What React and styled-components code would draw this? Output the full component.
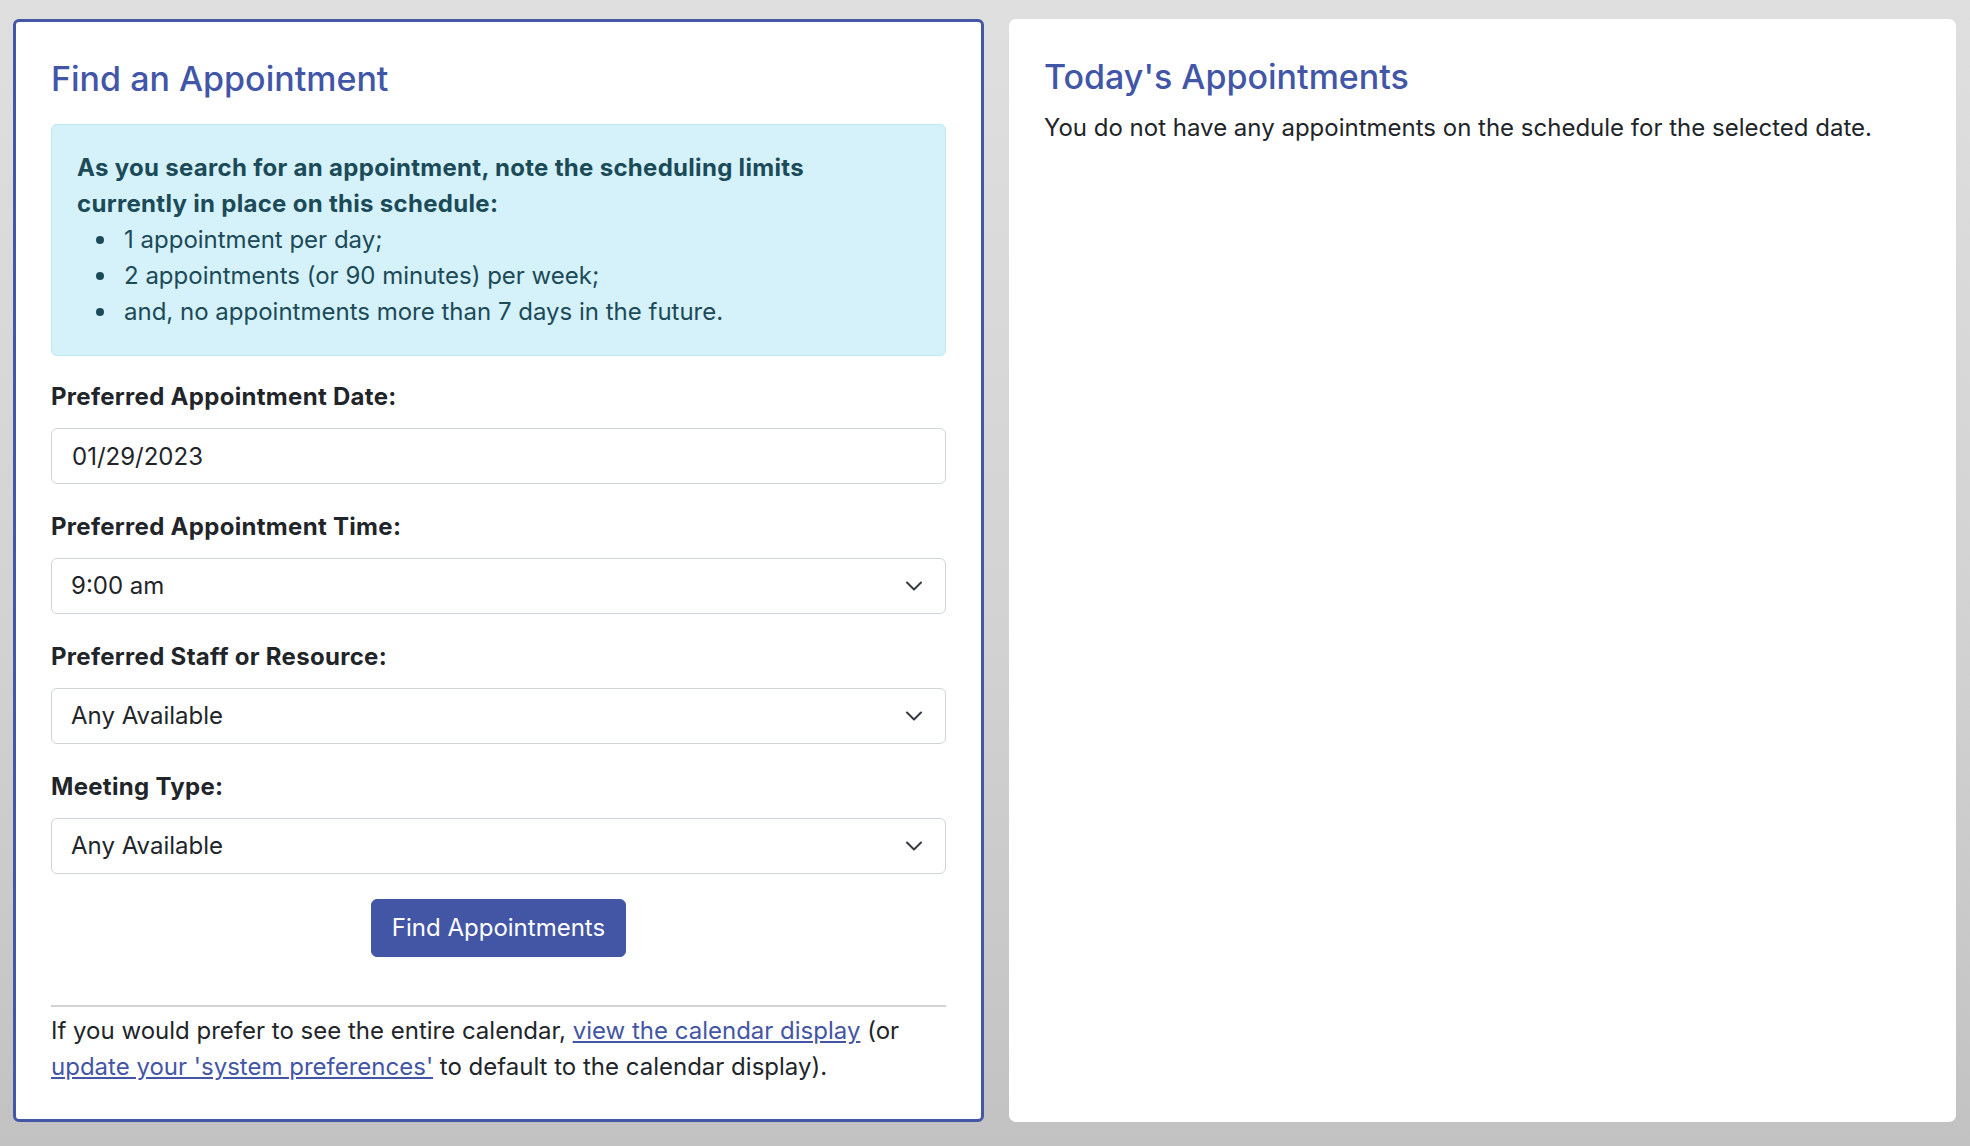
import styled, { createGlobalStyle } from 'styled-components';

const GlobalStyle = createGlobalStyle`
  html, body {
    margin: 0;
    padding: 0;
  }
  body {
    font-family: Inter, "Liberation Sans", Arial, sans-serif;
    font-size: 24px;
    line-height: 36px;
    color: #212529;
  }
  * { box-sizing: border-box; }
`;

function Chevron() {
    return (
        <ChevronIcon width="18" height="12" viewBox="0 0 18 12" fill="none">
            <path d="M2 2.5l7 7 7-7" stroke="#343a40" strokeWidth="2" strokeLinecap="round" strokeLinejoin="round" />
        </ChevronIcon>
    );
}

function SelectField({ label, value, options }) {
    return (
        <Group>
            <Label>{label}</Label>
            <SelectWrap>
                <Select defaultValue={value}>
                    {options.map((o) => (
                        <option key={o}>{o}</option>
                    ))}
                </Select>
                <Chevron />
            </SelectWrap>
        </Group>
    );
}

function App() {
    return (
        <>
            <GlobalStyle />
            <Page>
                <FindCard>
                    <Title>Find an Appointment</Title>
                    <Alert>
                        <AlertLead>
                            As you search for an appointment, note the scheduling limits<br />
                            currently in place on this schedule:
                        </AlertLead>
                        <Limits>
                            <li>1 appointment per day;</li>
                            <li>2 appointments (or 90 minutes) per week;</li>
                            <li>and, no appointments more than 7 days in the future.</li>
                        </Limits>
                    </Alert>

                    <Group>
                        <Label>Preferred Appointment Date:</Label>
                        <Input type="text" defaultValue="01/29/2023" />
                    </Group>
                    <SelectField label="Preferred Appointment Time:" value="9:00 am" options={['8:00 am', '8:30 am', '9:00 am', '9:30 am', '10:00 am']} />
                    <SelectField label="Preferred Staff or Resource:" value="Any Available" options={['Any Available']} />
                    <SelectField label="Meeting Type:" value="Any Available" options={['Any Available']} />

                    <ButtonRow>
                        <Button type="button">Find Appointments</Button>
                    </ButtonRow>

                    <Divider />
                    <Footnote>
                        If you would prefer to see the entire calendar, <Link href="#">view the calendar display</Link> (or{' '}
                        <Link href="#">update your 'system preferences'</Link> to default to the calendar display).
                    </Footnote>
                </FindCard>

                <TodayCard>
                    <TodayTitle>Today's Appointments</TodayTitle>
                    <Text>You do not have any appointments on the schedule for the selected date.</Text>
                </TodayCard>
            </Page>
        </>
    );
}

const Page = styled.div`
  min-height: 100vh;
  display: grid;
  grid-template-columns: 971px 947px;
  gap: 25px;
  align-items: stretch;
  padding: 19px 14px 24px 13px;
  background: linear-gradient(180deg, #dfdfdf 0%, #d2d2d2 55%, #c2c2c2 100%);
`;

const FindCard = styled.div`
  background: #fff;
  border: 3px solid #4457a6;
  border-radius: 6px;
  padding: 36px 35px 34px;
`;

const TodayCard = styled.div`
  background: #fff;
  border-radius: 7px;
  padding: 37px 35px;
`;

const Title = styled.h3`
  margin: 0 0 24px;
  font-size: 34px;
  line-height: 42px;
  font-weight: 500;
  color: #4256a8;
`;

const TodayTitle = styled(Title)`
  margin-bottom: 12px;
`;

const Text = styled.p`
  margin: 0;
`;

const Alert = styled.div`
  background: #d5f1f9;
  border: 1px solid #bde9f5;
  border-radius: 6px;
  padding: 25px;
  color: #1b4a58;
  margin-bottom: 23px;
`;

const AlertLead = styled.div`
  font-weight: 700;
  letter-spacing: 0.3px;
`;

const Limits = styled.ul`
  margin: 0;
  padding-left: 47px;
  list-style: none;

  li {
    position: relative;
  }

  li::before {
    content: '';
    position: absolute;
    left: -28px;
    top: 14px;
    width: 8px;
    height: 8px;
    border-radius: 50%;
    background: #1b4a58;
  }
`;

const Group = styled.div`
  margin-bottom: 25px;
`;

const Label = styled.label`
  display: block;
  font-weight: 700;
  letter-spacing: 0.3px;
  margin-bottom: 13px;
`;

const Input = styled.input`
  display: block;
  width: 100%;
  height: 56px;
  padding: 0 20px;
  font: inherit;
  color: #212529;
  background: #fff;
  border: 1px solid #ced4da;
  border-radius: 6px;
  outline: none;
`;

const SelectWrap = styled.div`
  position: relative;
`;

const Select = styled.select`
  display: block;
  width: 100%;
  height: 56px;
  padding: 0 50px 0 19px;
  font: inherit;
  color: #212529;
  background: #fff;
  border: 1px solid #ced4da;
  border-radius: 6px;
  appearance: none;
  outline: none;
`;

const ChevronIcon = styled.svg`
  position: absolute;
  right: 23px;
  top: 50%;
  transform: translateY(-50%);
  pointer-events: none;
`;

const ButtonRow = styled.div`
  display: flex;
  justify-content: center;
  margin-top: 25px;
`;

const Button = styled.button`
  height: 58px;
  padding: 0 20px;
  font: inherit;
  color: #fff;
  background: #4356a5;
  border: 1px solid #4356a5;
  border-radius: 6px;
  cursor: pointer;
`;

const Divider = styled.hr`
  margin: 48px 0 6px;
  border: none;
  border-top: 2px solid #d3d3d3;
`;

const Footnote = styled.p`
  margin: 0;
`;

const Link = styled.a`
  color: #4356a6;
  text-decoration: underline;
`;

export default App;
